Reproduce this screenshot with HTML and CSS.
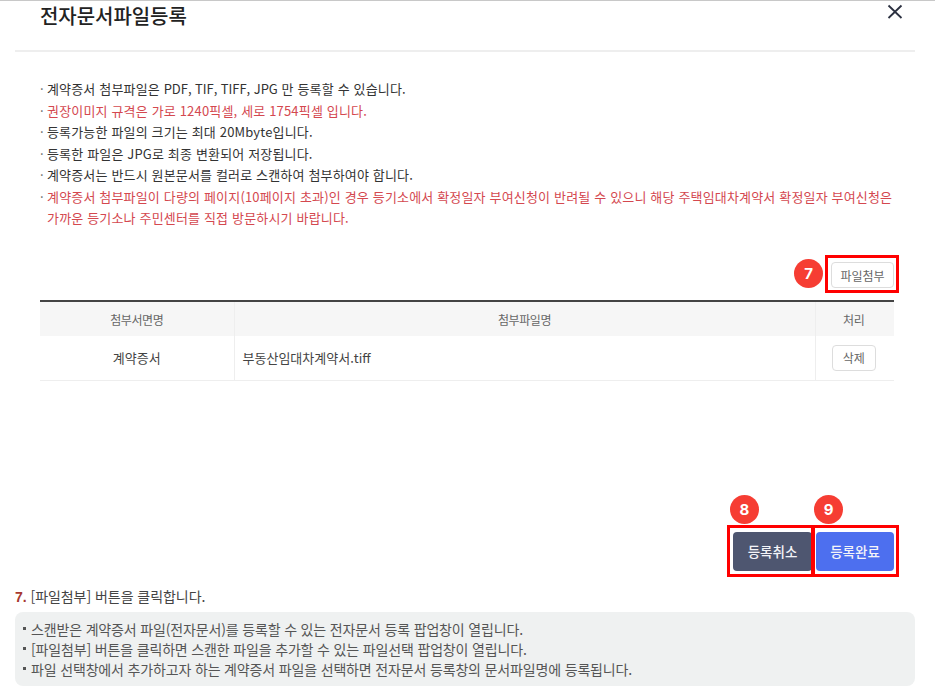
FILE: index.html
```html
<!DOCTYPE html>
<html lang="ko">
<head>
<meta charset="utf-8">
<title>전자문서파일등록</title>
<link rel="stylesheet" href="styles.css">
</head>
<body>
<div class="page">
  <header class="head">
    <h1 class="title">전자문서파일등록</h1>
    <svg class="close" width="16" height="16" viewBox="0 0 16 16"><path d="M1.5 1.5 L14.5 14 M14.5 1.5 L1.5 14" stroke="#2b3040" stroke-width="1.8" fill="none"/></svg>
  </header>
  <ul class="notes">
    <li>계약증서 첨부파일은 <span class="tight">PDF, TIF, TIFF, JPG</span> 만 등록할 수 있습니다.</li>
    <li class="red">권장이미지 규격은 가로 1240픽셀, 세로 1754픽셀 입니다.</li>
    <li>등록가능한 파일의 크기는 최대 20Mbyte입니다.</li>
    <li>등록한 파일은 JPG로 최종 변환되어 저장됩니다.</li>
    <li>계약증서는 반드시 원본문서를 컬러로 스캔하여 첨부하여야 합니다.</li>
    <li class="red">계약증서 첨부파일이 다량의 페이지(10페이지 초과)인 경우 등기소에서 확정일자 부여신청이 반려될 수 있으니 해당 주택임대차계약서 확정일자 부여신청은 가까운 등기소나 주민센터를 직접 방문하시기 바랍니다.</li>
  </ul>
  <div class="attach-row">
    <span class="badge badge-7">7</span>
    <span class="frame frame-7"></span>
    <button class="btn btn-attach">파일첨부</button>
  </div>
  <table class="files">
    <thead>
      <tr><th class="c1">첨부서면명</th><th>첨부파일명</th><th class="c3">처리</th></tr>
    </thead>
    <tbody>
      <tr><td class="c1">계약증서</td><td class="name">부동산임대차계약서.tiff</td><td class="c3"><button class="btn btn-del">삭제</button></td></tr>
    </tbody>
  </table>
  <div class="actions">
    <span class="badge badge-8">8</span>
    <span class="badge badge-9">9</span>
    <span class="frame frame-8"></span>
    <span class="frame frame-9"></span>
    <button class="act act-cancel">등록취소</button>
    <button class="act act-done">등록완료</button>
  </div>
  <p class="step"><b>7.</b> [파일첨부] 버튼을 클릭합니다.</p>
  <ul class="help">
    <li>스캔받은 계약증서 파일(전자문서)를 등록할 수 있는 전자문서 등록 팝업창이 열립니다.</li>
    <li>[파일첨부] 버튼을 클릭하면 스캔한 파일을 추가할 수 있는 파일선택 팝업창이 열립니다.</li>
    <li>파일 선택창에서 추가하고자 하는 계약증서 파일을 선택하면 전자문서 등록창의 문서파일명에 등록됩니다.</li>
  </ul>
</div>
</body>
</html>
```
FILE: styles.css
```css
* { box-sizing: border-box; }
html, body { margin: 0; padding: 0; background: #fff; }
body { font-family: "Noto Sans CJK KR", "Noto Sans", sans-serif; color: #333; overflow: hidden; }
.page { width: 935px; height: 696px; border-top: 1px solid #c8c8c8; position: relative; }
.head { margin: 0 20px 0 15px; height: 51px; border-bottom: 2px solid #eee; display: flex; justify-content: space-between; padding-left: 25px; position: relative; }
.title { margin: 0; font-size: 20px; font-weight: 500; line-height: 30px; color: #222; letter-spacing: -0.05px; }
.close { position: absolute; left: 872px; top: 3px; }
.notes { list-style: none; margin: 26px 0 0; padding: 0 40px 0 47px; font-size: 13px; line-height: 21.5px; color: #333; letter-spacing: 0.16px; }
.notes li { position: relative; }
.notes li::before { content: "·"; position: absolute; left: -7px; color: #666; }
.tight { letter-spacing: -0.05px; }
.notes .red { color: #d4484f; letter-spacing: 0.17px; }
.attach-row { height: 34px; margin: 29.5px 40px 0; position: relative; display: flex; justify-content: flex-end; align-items: center; }
.btn { font-family: inherit; background: #fff; border: 1px solid #ddd; border-radius: 4px; color: #666; font-size: 12px; padding: 0; }
.btn-attach { width: 63px; height: 26px; margin-right: 1px; }
.btn-del { width: 44px; height: 26px; margin-right: 2px; }
.badge { position: absolute; width: 29px; height: 29px; border-radius: 50%; background: #f63d33; color: #fff; font-family: "Inter", sans-serif; font-weight: 700; font-size: 15px; display: flex; align-items: center; justify-content: center; }
.frame { position: absolute; border: 3px solid #f00; pointer-events: none; }
.badge-7 { left: 754px; top: 1px; }
.frame-7 { left: 785px; top: -3px; width: 74px; height: 38px; }
.files { margin: 8px 0 0 40px; width: 854px; border-collapse: collapse; table-layout: fixed; border-top: 2px solid #444; font-size: 13px; }
.files th { background: #f6f6f6; font-weight: 400; font-size: 12px; letter-spacing: -0.4px; color: #666; height: 35px; border-left: 1px solid #eee; padding: 0; }
.files td { height: 44px; border-bottom: 1px solid #eee; border-left: 1px solid #eee; text-align: center; color: #444; padding: 0; }
.files .c1 { width: 194px; border-left: 0; }
.files .c3 { width: 79px; }
.files th.c3 { padding-right: 2px; }
.files .name { text-align: left; padding-left: 8px; color: #444; }
.actions { position: relative; margin: 151px 41px 0 0; height: 38px; display: flex; justify-content: flex-end; gap: 4px; }
.act { width: 79px; height: 39px; border: 0; border-radius: 4px; color: #f4f4f8; font-family: inherit; font-size: 13.5px; font-weight: 500; padding: 0; }
.act-cancel { background: #4e5670; }
.act-done { width: 78px; background: #4d6fef; }
.badge-8 { left: 730px; top: -37px; }
.badge-9 { left: 814px; top: -37px; }
.frame-8 { left: 727px; top: -7px; width: 87px; height: 52px; }
.frame-9 { left: 812px; top: -7px; width: 87px; height: 52px; }
.step { margin: 16px 0 0 15px; font-size: 14px; line-height: 20px; color: #444; letter-spacing: -0.05px; }
.step b { color: #a8392f; font-family: "Liberation Sans", sans-serif; }
.help { list-style: none; margin: 5px 20px 0 15px; padding: 7px 0 7px 16px; background: #eff1f1; border-radius: 8px; font-size: 14px; line-height: 20px; color: #555; letter-spacing: -0.16px; }
.help li { position: relative; }
.help li::before { content: ""; position: absolute; left: -8px; top: 8px; width: 3px; height: 3px; background: #555; }
```
